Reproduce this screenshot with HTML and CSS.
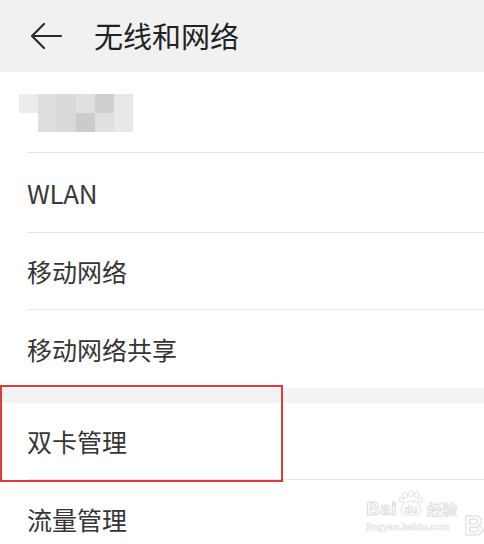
FILE: index.html
```html
<!DOCTYPE html>
<html lang="zh-CN">
<head>
<meta charset="utf-8">
<title>无线和网络</title>
<link rel="stylesheet" href="styles.css">
</head>
<body>
<div class="screen">
  <header class="topbar">
    <svg class="back" width="32" height="28" viewBox="0 0 32 28">
      <path d="M31 14H2M14 2L2 14L14 26" fill="none" stroke="#2b2b2b" stroke-width="2.2" stroke-linecap="round" stroke-linejoin="round"/>
    </svg>
    <h1 class="title">无线和网络</h1>
  </header>

  <section class="group">
    <div class="row row-blur">
      <div class="mosaic">
        <span class="m m1"></span><span class="m m2"></span><span class="m m3"></span><span class="m m4"></span><span class="m m5"></span><span class="m m6"></span>
        <span class="m m0"></span><span class="m m2"></span><span class="m m3"></span><span class="m m7"></span><span class="m m4"></span><span class="m m6"></span>
      </div>
    </div>
    <div class="row row-wlan"><span class="label latin">WLAN</span></div>
    <div class="row row-mobile"><span class="label">移动网络</span></div>
    <div class="row row-share last"><span class="label">移动网络共享</span></div>
  </section>

  <div class="spacer"></div>

  <section class="group">
    <div class="row row-dual"><span class="label">双卡管理</span></div>
    <div class="row row-traffic last"><span class="label">流量管理</span></div>
  </section>

  <div class="highlight"></div>

  <div class="watermark">
    <div class="wm-main">
      <div class="wm-top">
        <span class="wm-bai">Bai</span>
        <span class="wm-du">
          <svg class="paw" width="26" height="26" viewBox="0 0 26 26">
            <g fill="#fff" stroke="#e0e0e0" stroke-width="1">
              <ellipse cx="7" cy="5" rx="2.4" ry="3"/>
              <ellipse cx="13" cy="3.5" rx="2.4" ry="3"/>
              <ellipse cx="19" cy="5" rx="2.4" ry="3"/>
              <ellipse cx="22.5" cy="10" rx="2" ry="2.6"/>
              <ellipse cx="3.5" cy="10" rx="2" ry="2.6"/>
              <path d="M3 21c0-6 4.5-10 10-10s10 4 10 10c0 2.5-2 4-4.5 4h-11C5 25 3 23.5 3 21z"/>
            </g>
          </svg>
          <span class="wm-dutext">du</span>
        </span>
        <span class="wm-jy">经验</span>
      </div>
      <div class="wm-url">jingyan.baidu.com</div>
    </div>
    <div class="wm-ba">Ba</div>
  </div>
</div>
</body>
</html>
```

FILE: styles.css
```css
html, body {
  margin: 0;
  padding: 0;
  background: #ffffff;
}

body {
  font-family: "Noto Sans CJK SC", "Noto Sans", sans-serif;
  color: #333333;
}

.screen {
  position: relative;
  width: 484px;
  height: 544px;
  overflow: hidden;
  display: flex;
  flex-direction: column;
}

.topbar {
  flex: none;
  height: 72px;
  background: #f1f1f1;
  display: flex;
  align-items: center;
  padding-left: 30px;
}

.back {
  display: block;
  flex: none;
  margin-top: -1px;
}

.title {
  margin: 0 0 0 32px;
  font-size: 29px;
  font-weight: 400;
  color: #222222;
  line-height: 1;
  margin-top: -2px;
}

.group {
  display: flex;
  flex-direction: column;
  flex: none;
}

.row {
  display: flex;
  align-items: center;
  margin-left: 28px;
  border-bottom: 1px solid #e6e6e6;
  box-sizing: border-box;
}

.row.last {
  border-bottom: none;
}

.row-blur { height: 81px; }
.row-wlan { height: 80px; }
.row-mobile { height: 77px; }
.row-share { height: 78px; }
.row-dual { height: 77px; }
.row-traffic { height: 78px; }

.label {
  font-size: 25px;
  line-height: 1;
  color: #353535;
  margin-left: -1px;
}

.label.latin {
  font-size: 26px;
  letter-spacing: -0.4px;
  color: #3a3a3a;
}

.spacer {
  flex: none;
  height: 15px;
  background: #f2f2f2;
}

.mosaic {
  display: grid;
  grid-template-columns: repeat(6, 19px);
  grid-template-rows: repeat(2, 19px);
  margin-left: -9px;
  margin-top: 1px;
}

.m { display: block; }
.m0 { background: #ffffff; }
.m1 { background: #ececec; }
.m2 { background: #dedede; }
.m3 { background: #d9d9d9; }
.m4 { background: #e0e0e0; }
.m5 { background: #cfcfcf; }
.m6 { background: #e8e8e8; }
.m7 { background: #cbcbcb; }

.highlight {
  position: absolute;
  left: 0;
  top: 385px;
  width: 283px;
  height: 97px;
  box-sizing: border-box;
  border: 2px solid #e2393a;
}

.watermark {
  position: absolute;
  left: 366px;
  top: 488px;
  width: max-content;
  white-space: nowrap;
  display: flex;
  align-items: flex-end;
  gap: 7px;
  pointer-events: none;
}

.wm-main {
  display: flex;
  flex-direction: column;
  align-items: flex-start;
  flex: none;
}

.wm-top {
  display: flex;
  align-items: flex-end;
  height: 30px;
  flex: none;
}

.wm-bai, .wm-ba, .wm-dutext, .wm-jy, .wm-url {
  font-family: "Liberation Sans", sans-serif;
  color: #ffffff;
  -webkit-text-stroke: 1px #dddddd;
  white-space: nowrap;
}

.wm-bai {
  font-size: 19px;
  font-weight: 700;
  line-height: 1;
  letter-spacing: 0.5px;
}

.wm-du {
  position: relative;
  flex: none;
  width: 26px;
  height: 30px;
  margin: 0 3px 0 1px;
}

.paw {
  position: absolute;
  left: 0;
  top: 2px;
}

.wm-dutext {
  position: absolute;
  left: 6px;
  top: 15px;
  font-size: 11px;
  font-weight: 700;
  -webkit-text-stroke: 0.6px #d8d8d8;
}

.wm-jy {
  font-family: "Noto Sans CJK SC", sans-serif;
  font-size: 15px;
  line-height: 1;
  font-weight: 700;
  -webkit-text-stroke: 0.7px #dadada;
  margin-bottom: 2px;
}

.wm-url {
  font-size: 9.5px;
  font-weight: 700;
  line-height: 1;
  margin-top: 4px;
  -webkit-text-stroke: 0.5px #dcdcdc;
}

.wm-ba {
  flex: none;
  font-size: 27px;
  font-weight: 700;
  line-height: 1;
  margin-bottom: -8px;
}
```
